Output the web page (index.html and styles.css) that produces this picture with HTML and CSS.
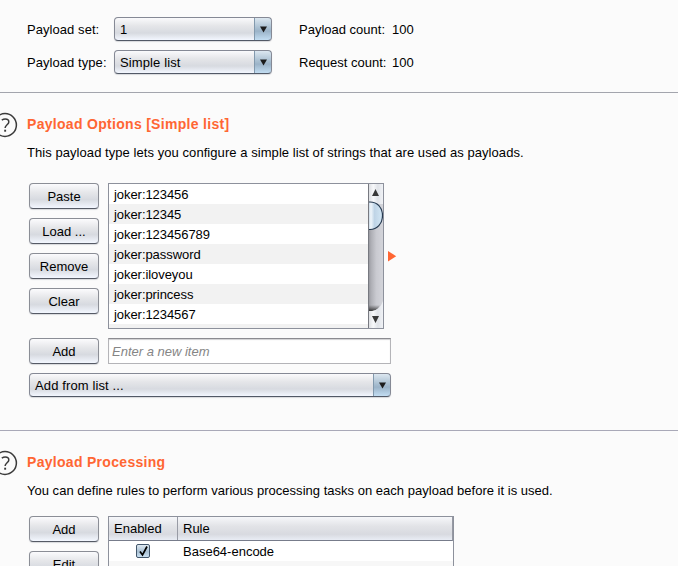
FILE: index.html
```html
<!DOCTYPE html>
<html lang="en">
<head>
<meta charset="utf-8">
<title>Payloads</title>
<link rel="stylesheet" href="styles.css">
</head>
<body>
<section class="sets">
  <div class="set-row"><span class="set-label">Payload set:</span><div class="combo combo-small"><span class="value">1</span><span class="drop"><svg width="7" height="7"><path d="M0 .5H7L3.500 6.500Z"/></svg></span></div><span class="count-label">Payload count:</span><span class="count">100</span></div>
  <div class="set-row"><span class="set-label">Payload type:</span><div class="combo combo-small"><span class="value">Simple list</span><span class="drop"><svg width="7" height="7"><path d="M0 .5H7L3.500 6.500Z"/></svg></span></div><span class="count-label">Request count:</span><span class="count">100</span></div>
</section>

<section class="options">
  <header class="head">
    <svg class="help" width="18" height="26"><circle cx="5" cy="13" r="11.4"/><path d="M1.8 8.2C3 7.3 4.1 7 5.3 7C7.4 7 8.8 8.1 8.8 9.9C8.8 12.5 5.1 13 5.1 16"/><rect x="4.2" y="17.7" width="1.9" height="2"/></svg>
    <h2>Payload Options [Simple list]</h2>
  </header>
  <p class="options-text">This payload type lets you configure a simple list of strings that are used as payloads.</p>
  <div class="editor">
    <div class="buttons">
      <button>Paste</button>
      <button>Load ...</button>
      <button>Remove</button>
      <button>Clear</button>
    </div>
    <div class="list">
      <ul>
        <li>joker:123456</li>
        <li>joker:12345</li>
        <li>joker:123456789</li>
        <li>joker:password</li>
        <li>joker:iloveyou</li>
        <li>joker:princess</li>
        <li>joker:1234567</li>
        <li></li>
      </ul>
      <svg class="scroll" width="15" height="144">
        <defs>
          <linearGradient id="track"><stop offset="0" stop-color="#909198"/><stop offset=".2" stop-color="#adaeb4"/><stop offset=".55" stop-color="#c9cad0"/><stop offset="1" stop-color="#d3d4da"/></linearGradient>
          <linearGradient id="cap"><stop offset="0" stop-color="#d8dade"/><stop offset=".35" stop-color="#f7f8fa"/><stop offset=".65" stop-color="#e0e3e8"/><stop offset="1" stop-color="#f0f2f6"/></linearGradient>
          <linearGradient id="thumb"><stop offset="0" stop-color="#b9cbdc"/><stop offset=".2" stop-color="#f0f6fb"/><stop offset=".45" stop-color="#bfd4e6"/><stop offset="1" stop-color="#d3e7f5"/></linearGradient>
          <linearGradient id="shade" x2="0" y2="1"><stop offset="0" stop-color="#333" stop-opacity="0"/><stop offset="1" stop-color="#222" stop-opacity=".85"/></linearGradient>
        </defs>
        <rect width="15" height="144" fill="url(#track)"/>
        <rect width="15" height="20" fill="url(#cap)"/>
        <path d="M0 121H12Q10 126 5 127H0Z" fill="url(#shade)"/>
        <path d="M0 127H4Q12 126 15 117V144H0Z" fill="url(#cap)"/>
        <path d="M0 18H2C9 18 14.500 23 14.500 31.500S9 45.500 2 45.500H0Z" fill="url(#thumb)"/>
        <path d="M0 18H2C9 18 14.500 23 14.500 31.500S9 45.500 2 45.500H0" fill="none" stroke="#263a50" stroke-width="1.2"/>
        <path d="M4 12H11L7.500 5Z M4 132H11L7.500 139Z" fill="#383838"/>
        <path d="M.5 0V144" stroke="#777980" stroke-width="1"/>
      </svg>
    </div>
    <svg class="pointer" width="9" height="11"><path d="M0 0L8.200 5.200L0 10.400Z"/></svg>
  </div>
  <div class="add-row">
    <button>Add</button>
    <input type="text" placeholder="Enter a new item">
  </div>
  <div class="combo combo-wide"><span class="value">Add from list ...</span><span class="drop"><svg width="7" height="7"><path d="M0 .5H7L3.500 6.500Z"/></svg></span></div>
</section>

<section class="processing">
  <header class="head">
    <svg class="help" width="18" height="26"><circle cx="5" cy="13" r="11.4"/><path d="M1.8 8.2C3 7.3 4.1 7 5.3 7C7.4 7 8.8 8.1 8.8 9.9C8.8 12.5 5.1 13 5.1 16"/><rect x="4.2" y="17.7" width="1.9" height="2"/></svg>
    <h2>Payload Processing</h2>
  </header>
  <p class="processing-text">You can define rules to perform various processing tasks on each payload before it is used.</p>
  <div class="editor">
    <div class="buttons">
      <button>Add</button>
      <button>Edit</button>
    </div>
    <div class="table">
      <div class="thead"><span class="enabled">Enabled</span><span class="rule">Rule</span></div>
      <div class="trow"><span class="check"><svg width="14" height="14"><path d="M3 6.500L5.500 10L10 1.500"/></svg></span><span class="rule">Base64-encode</span></div>
      <div class="trow alt"></div>
    </div>
  </div>
</section>
</body>
</html>
```
FILE: styles.css
```css
* { box-sizing: border-box; }
html, body { height: 566px; overflow: hidden; }
body {
  margin: 0;
  background: #fbfbfb;
  color: #000;
  font: 13px/20px "Liberation Sans", Arial, sans-serif;
}
svg { display: block; flex: none; }
span, p, h2, li { white-space: nowrap; }

.sets { height: 93px; padding: 17px 0 0 27px; border-bottom: 1px solid #a3a5ad; }
.set-row { display: flex; align-items: center; height: 24px; margin-bottom: 9px; }
.set-label, .count-label, .count { padding-top: 2px; }
.set-label { width: 87px; letter-spacing: .06px; }
.count-label { width: 93px; margin-left: 27px; }

.combo {
  display: flex;
  height: 24px;
  border: 1px solid #858995;
  border-bottom: 1px solid #525966;
  border-radius: 4px;
  background: linear-gradient(#fafafc, #e5e6e9 35%, #d7dae0 68%, #f3f7ff);
  box-shadow: 0 1px 1px #d8d9dc;
  overflow: hidden;
}
.combo-small { width: 158px; }
.combo-wide { width: 362px; margin-top: 9px; margin-left: 29px; }
.value { flex: 1; padding-left: 5px; line-height: 23px; letter-spacing: .12px; }
.drop {
  display: flex;
  align-items: center;
  justify-content: center;
  width: 18px;
  margin: -1px;
  border: 1px solid #5c7890;
  border-left-color: #8299ad;
  border-bottom-color: #29435c;
  border-radius: 0 4px 4px 0;
  background: linear-gradient(#dce7f0, #a9bfd1 45%, #9bb3c8 60%, #c2ddf2);
  fill: #1c1c1c;
}

.options { height: 338px; padding-top: 19px; border-bottom: 1px solid #a9a9b8; }
.processing { padding-top: 19px; }
.head { display: flex; height: 26px; }
.help { width: 27px; fill: none; stroke: #3b3b3b; stroke-width: 1.5; }
.help rect { fill: #3b3b3b; stroke: none; }
h2 { margin: 2px 0 0; font-size: 14px; line-height: 20px; letter-spacing: .3px; color: #ff6633; }
p { margin: 5px 0 0 27px; line-height: 20px; }
.options-text { letter-spacing: .06px; }
.processing-text { letter-spacing: .017px; }
.editor { display: flex; margin: 20px 0 0 29px; }
.processing .editor { margin-top: 15px; }
.buttons { display: flex; flex-direction: column; gap: 9px; width: 79px; }
button {
  width: 70px;
  height: 26px;
  padding: 1px 0 0;
  border: 1px solid #8b8e96;
  border-bottom-color: #555a65;
  border-radius: 4px;
  background: linear-gradient(#fbfbfd, #e6e7ea 35%, #d7dae0 65%, #f3f7ff);
  box-shadow: 0 1px 1px #d8d9dc;
  font: 13px/20px "Liberation Sans", Arial, sans-serif;
  color: #000;
}
.list {
  display: flex;
  width: 276px;
  height: 146px;
  border: 1px solid #8d919c;
  background: #fff;
  overflow: hidden;
}
ul { flex: 1; margin: 0; padding: 0; list-style: none; }
li { height: 20px; padding-left: 5px; line-height: 21px; letter-spacing: -.06px; }
li:nth-child(even) { background: #f2f2f2; }
.pointer { margin: 68px 0 0 4px; fill: #ff6633; }
.add-row { display: flex; gap: 9px; margin: 9px 0 0 29px; }
input {
  width: 283px;
  height: 26px;
  padding: 1px 3px 0;
  border: 1px solid #b4b4b8;
  border-top-color: #8b8b90;
  border-radius: 0;
  background: #fff;
  box-shadow: inset 0 1px 1px #d0d0d2;
  font: italic 13px "Liberation Sans", Arial, sans-serif;
}
input::placeholder { color: #858585; opacity: 1; }

.table { width: 346px; height: 60px; border: 1px solid #8d919c; background: #fff; }
.thead {
  display: flex;
  height: 24px;
  border-bottom: 1px solid #777c8b;
  border-right: 1px solid #9699a3;
  background: linear-gradient(#f6f7fa, #e2e3e7 40%, #d8dae0 75%, #e9edf5);
  line-height: 23px;
}
.enabled { width: 69px; padding-left: 5px; border-right: 1px solid #989ba5; }
.rule { padding-left: 5px; }
.trow { display: flex; height: 20px; line-height: 21px; }
.alt { background: #f7f7f7; }
.check { display: flex; width: 69px; padding: 3px 0 0 27px; }
.check svg {
  border: 1px solid #42566b;
  border-radius: 2px;
  background: linear-gradient(#dfe9f1, #a9c0d3 55%, #c9e0f2);
  fill: none;
  stroke: #000;
  stroke-width: 1.7;
}
```
